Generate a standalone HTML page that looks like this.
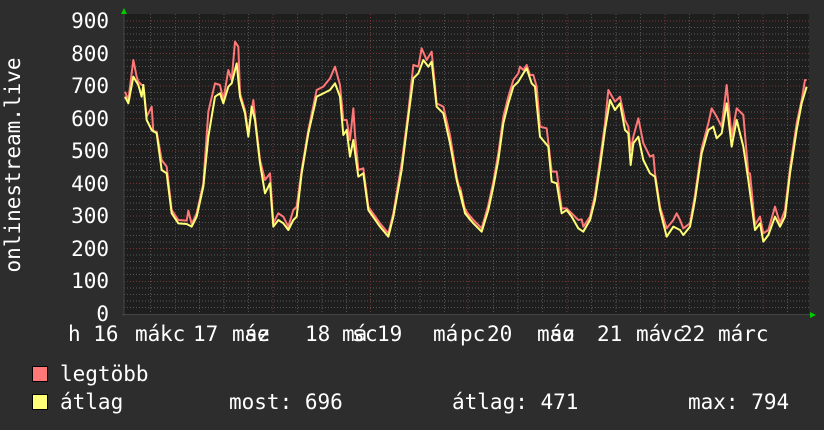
<!DOCTYPE html>
<html><head><meta charset="utf-8"><style>
html,body{margin:0;padding:0;background:#2d2d2d;}
svg{display:block}
text{font-family:"DejaVu Sans Mono","Liberation Mono",monospace;font-size:21px;fill:#fff}
</style></head><body>
<svg width="824" height="430" xmlns="http://www.w3.org/2000/svg">
<rect width="824" height="430" fill="#2d2d2d"/>
<rect x="124" y="14" width="685" height="301" fill="#1e1e1e"/>
<g id="grid" stroke-width="1" fill="none">
<g stroke="#555" stroke-dasharray="1,2">
<path d="M124 307.5H809M124 301H809M124 294.5H809M124 288H809M124 274.5H809M124 268H809M124 261.5H809M124 255H809M124 242H809M124 235.5H809M124 229H809M124 222.5H809M124 209.5H809M124 203H809M124 196.5H809M124 190H809M124 177H809M124 170.5H809M124 164H809M124 157.5H809M124 144.5H809M124 138H809M124 131.5H809M124 125H809M124 112H809M124 105.5H809M124 99H809M124 92.5H809M124 79.5H809M124 73H809M124 66.5H809M124 60H809M124 47H809M124 40.5H809M124 34H809M124 27.5H809"/>
<path d="M150.5 14V315M199.5 14V315M224 14V315M248.5 14V315M297.5 14V315M322 14V315M346.5 14V315M395.5 14V315M420 14V315M444.5 14V315M493.5 14V315M518 14V315M542.5 14V315M591.5 14V315M616 14V315M640.5 14V315M689.5 14V315M714 14V315M738.5 14V315M787.5 14V315"/>
</g>
<g stroke="#7a3535" stroke-dasharray="1,2">
<path d="M124 281.5H809M124 248.5H809M124 216H809M124 183.5H809M124 151H809M124 118.5H809M124 86H809M124 53.5H809M124 21H809"/>
<path d="M175.5 14V315M273 14V315M370.5 14V315M468 14V315M567 14V315M665 14V315M763 14V315"/>
</g>
</g>
<line x1="124" y1="12" x2="124" y2="316" stroke="#444"/>
<line x1="122" y1="314.5" x2="812" y2="314.5" stroke="#444"/>
<polygon points="121,14 127,14 124,8" fill="#0c0"/>
<polygon points="810,312 810,318 816,315" fill="#0c0"/>

<g transform="translate(120,20) scale(0.33333)" fill="none" stroke-linejoin="round">
<polyline vector-effect="non-scaling-stroke" stroke="#ff7777" stroke-width="2" points="15,215 25,240 40,120 50,170 55,185 65,195 70,195 80,290 95,260 100,335 110,335 125,420 140,440 155,570 175,600 200,602 205,572 215,612 230,580 250,490 265,275 285,190 300,195 310,240 325,150 335,180 345,65 355,80 360,220 375,270 385,340 400,240 405,290 420,420 435,480 450,460 460,610 475,580 490,590 505,620 520,570 530,560 545,450 565,330 590,210 610,200 630,175 645,140 660,195 670,300 680,300 690,360 700,265 705,345 715,450 730,445 745,560 780,610 805,640 820,580 845,430 865,275 880,135 895,140 905,85 920,120 935,95 950,250 970,260 990,345 1010,470 1030,555 1050,595"/>
<polyline vector-effect="non-scaling-stroke" stroke="#ffff77" stroke-width="2" points="15,230 25,250 40,170 55,195 65,230 70,195 80,300 95,330 110,340 125,450 140,460 155,580 175,610 200,612 215,620 230,590 250,500 265,350 285,230 300,220 310,250 325,200 335,190 350,130 360,230 375,280 385,350 395,260 405,300 420,430 435,520 450,490 460,620 475,600 490,610 505,630 520,600 530,590 545,460 565,340 590,230 610,220 630,210 645,190 660,230 670,345 680,330 690,410 700,360 715,470 730,460 745,570 780,620 805,650 820,590 845,450 865,290 880,175 895,160 910,120 925,140 935,125 950,260 970,280 990,370 1010,480 1030,560 1050,600"/>
</g>
<g transform="translate(460,20) scale(0.33333)" fill="none" stroke-linejoin="round">
<polyline vector-effect="non-scaling-stroke" stroke="#ff7777" stroke-width="2" points="0,500 15,570 40,600 65,625 85,555 100,485 115,400 130,290 145,230 160,180 175,160 180,140 190,150 200,135 210,165 220,165 230,200 240,320 260,325 275,455 290,455 305,565 320,565 335,580 355,600 365,598 370,620 390,590 405,525 420,420 435,310 445,210 465,245 480,230 495,300 505,320 512,390 520,350 535,295 550,370 570,410 580,405 585,460 600,560 620,625 640,600 650,580 660,600 670,625 690,610 705,525 725,385 745,310 755,265 770,290 785,320 800,195 815,350 830,265 850,285 865,460 870,460 885,615 900,590 910,640 925,630 945,560 960,610 975,570 990,445 1010,310 1025,240 1035,180 1040,180"/>
<polyline vector-effect="non-scaling-stroke" stroke="#ffff77" stroke-width="2" points="0,510 15,580 40,610 65,635 85,570 100,500 115,420 130,310 145,250 160,200 175,185 190,160 200,145 215,190 225,200 240,350 265,380 275,485 290,490 305,580 320,570 335,590 355,625 370,635 390,600 405,540 420,440 435,330 450,240 465,270 480,250 495,330 505,340 512,435 520,370 535,350 550,420 570,460 585,470 600,570 620,650 640,620 660,630 670,645 690,620 705,540 725,400 745,330 760,320 770,355 785,340 800,250 815,380 830,300 850,380 865,480 885,630 900,610 910,665 925,645 945,590 960,620 975,590 990,460 1010,330 1025,250 1040,200"/>
</g>

<g text-anchor="end">
<text x="109" y="28">900</text>
<text x="109" y="61">800</text>
<text x="109" y="93">700</text>
<text x="109" y="126">600</text>
<text x="109" y="158">500</text>
<text x="109" y="191">400</text>
<text x="109" y="223">300</text>
<text x="109" y="256">200</text>
<text x="109" y="288">100</text>
<text x="109" y="321">0</text>
</g>
<text transform="translate(20,165) rotate(-90)" text-anchor="middle">onlinestream.live</text>

<g>
<text x="68" y="341">h 16</text>
<text x="135" y="341">má</text><text x="160" y="341">kc</text><text x="193" y="341">17</text>
<text x="232" y="341">má</text><text x="245" y="341">sz</text><text x="257" y="341">e</text><text x="305" y="341">18</text>
<text x="342" y="341">má</text><text x="352" y="341">s</text><text x="365" y="341">c</text><text x="377" y="341">19</text>
<text x="433" y="341">má</text><text x="460" y="341">pc</text><text x="487" y="341">20</text>
<text x="537" y="341">má</text><text x="550" y="341">sz</text><text x="562" y="341">o</text><text x="597" y="341">21</text>
<text x="636" y="341">má</text><text x="660" y="341">vc</text><text x="680" y="341">22</text>
<text x="718" y="341">márc</text>
</g>

<rect x="32.5" y="366.5" width="15" height="15" fill="#ff7777" stroke="#000"/>
<rect x="32.5" y="394.5" width="15" height="15" fill="#ffff77" stroke="#000"/>
<text x="60" y="381">legtöbb</text>
<text x="60" y="409">átlag</text>
<text x="229" y="409">most: 696</text>
<text x="452" y="409">átlag: 471</text>
<text x="688" y="409">max: 794</text>
</svg>
</body></html>
